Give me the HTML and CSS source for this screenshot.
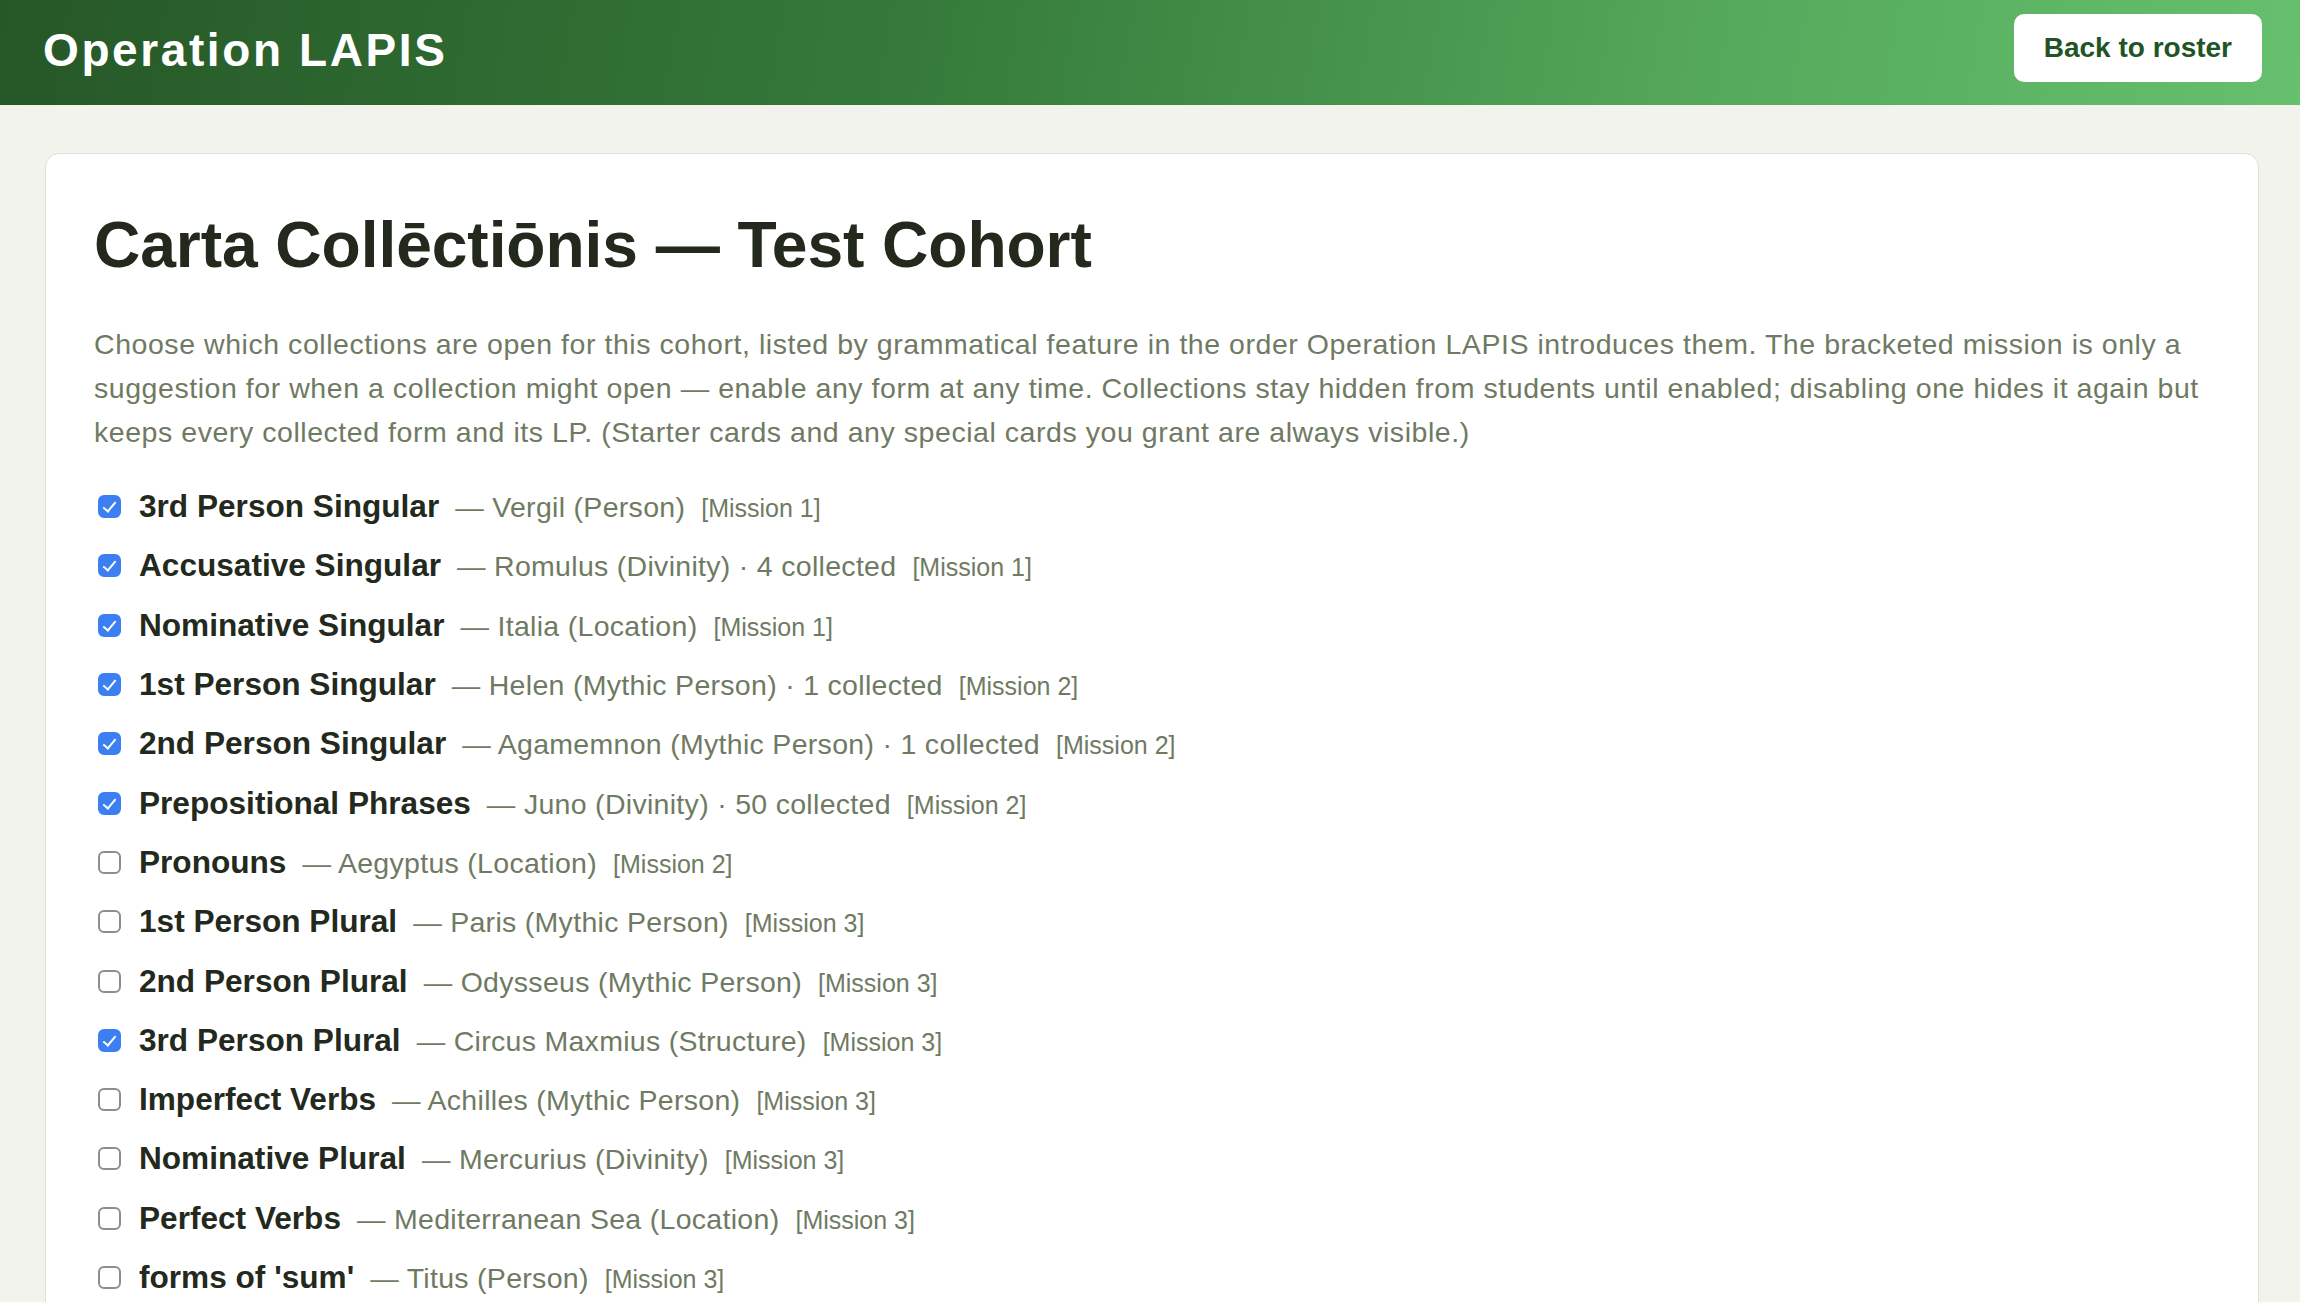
FILE: index.html
```html
<!DOCTYPE html>
<html lang="en">
<head>
    <meta charset="UTF-8">
    <meta name="viewport" content="width=device-width, initial-scale=1.0">
    <title>Operation LAPIS - Carta Collēctiōnis</title>
    <link rel="stylesheet" href="styles.css">
</head>
<body>
    <header class="topbar">
        <h1 class="brand">Operation LAPIS</h1>
        <a class="back-btn" href="#">Back to roster</a>
    </header>

    <main class="page">
        <section class="card">
            <h2 class="card-title">Carta Collēctiōnis — Test Cohort</h2>
            <p class="intro">Choose which collections are open for this cohort, listed by grammatical feature in the order Operation LAPIS introduces them. The bracketed mission is only a suggestion for when a collection might open — enable any form at any time. Collections stay hidden from students until enabled; disabling one hides it again but keeps every collected form and its LP. (Starter cards and any special cards you grant are always visible.)</p>

            <ul class="collections">
                <li><label class="item"><input type="checkbox" checked><span class="name">3rd Person Singular</span><span class="form">— Vergil (Person)</span><span class="mission">[Mission 1]</span></label></li>
                <li><label class="item"><input type="checkbox" checked><span class="name">Accusative Singular</span><span class="form">— Romulus (Divinity) · 4 collected</span><span class="mission">[Mission 1]</span></label></li>
                <li><label class="item"><input type="checkbox" checked><span class="name">Nominative Singular</span><span class="form">— Italia (Location)</span><span class="mission">[Mission 1]</span></label></li>
                <li><label class="item"><input type="checkbox" checked><span class="name">1st Person Singular</span><span class="form">— Helen (Mythic Person) · 1 collected</span><span class="mission">[Mission 2]</span></label></li>
                <li><label class="item"><input type="checkbox" checked><span class="name">2nd Person Singular</span><span class="form">— Agamemnon (Mythic Person) · 1 collected</span><span class="mission">[Mission 2]</span></label></li>
                <li><label class="item"><input type="checkbox" checked><span class="name">Prepositional Phrases</span><span class="form">— Juno (Divinity) · 50 collected</span><span class="mission">[Mission 2]</span></label></li>
                <li><label class="item"><input type="checkbox"><span class="name">Pronouns</span><span class="form">— Aegyptus (Location)</span><span class="mission">[Mission 2]</span></label></li>
                <li><label class="item"><input type="checkbox"><span class="name">1st Person Plural</span><span class="form">— Paris (Mythic Person)</span><span class="mission">[Mission 3]</span></label></li>
                <li><label class="item"><input type="checkbox"><span class="name">2nd Person Plural</span><span class="form">— Odysseus (Mythic Person)</span><span class="mission">[Mission 3]</span></label></li>
                <li><label class="item"><input type="checkbox" checked><span class="name">3rd Person Plural</span><span class="form">— Circus Maxmius (Structure)</span><span class="mission">[Mission 3]</span></label></li>
                <li><label class="item"><input type="checkbox"><span class="name">Imperfect Verbs</span><span class="form">— Achilles (Mythic Person)</span><span class="mission">[Mission 3]</span></label></li>
                <li><label class="item"><input type="checkbox"><span class="name">Nominative Plural</span><span class="form">— Mercurius (Divinity)</span><span class="mission">[Mission 3]</span></label></li>
                <li><label class="item"><input type="checkbox"><span class="name">Perfect Verbs</span><span class="form">— Mediterranean Sea (Location)</span><span class="mission">[Mission 3]</span></label></li>
                <li><label class="item"><input type="checkbox"><span class="name">forms of 'sum'</span><span class="form">— Titus (Person)</span><span class="mission">[Mission 3]</span></label></li>
            </ul>
        </section>
    </main>
</body>
</html>
```

FILE: styles.css
```css
/* General */
body {
    font-family: "Liberation Sans", Arial, Helvetica, sans-serif;
    background-color: #f2f3ec;
    color: #232a1d;
    margin: 0;
    padding: 0;
}

/* Top bar */
.topbar {
    display: flex;
    justify-content: space-between;
    align-items: center;
    padding: 14px 38px 23px 43px;
    background: linear-gradient(100deg, #265727 0%, #357a3a 40%, #55a95c 75%, #66c06e 100%);
}

.brand {
    margin: 4px 0 0 0;
    color: white;
    font-size: 46px;
    line-height: 1.1;
    letter-spacing: 2.6px;
}

.back-btn {
    background-color: white;
    color: #1f5524;
    font-size: 28px;
    font-weight: bold;
    line-height: 34px;
    padding: 17px 30px;
    border-radius: 10px;
    text-decoration: none;
}

/* Main card */
.page {
    padding: 48px 41px 0 45px;
}

.card {
    background-color: white;
    border: 1px solid #dee1d2;
    border-radius: 14px;
    padding: 53px 48px 48px 48px;
}

.card-title {
    margin: 0;
    font-size: 64.2px;
    line-height: 1.2;
    letter-spacing: -0.1px;
    color: #232a1d;
}

.intro {
    margin: 38px 0 23px;
    font-size: 28.5px;
    line-height: 44px;
    letter-spacing: 0.55px;
    color: #6f7a63;
}

/* Collections list */
.collections {
    list-style-type: none;
    margin: 0;
    padding: 0;
}

.collections li {
    height: 59.3px;
    display: flex;
    align-items: center;
}

.item {
    display: flex;
    align-items: baseline;
    gap: 16px;
    cursor: pointer;
}

.item input {
    appearance: none;
    -webkit-appearance: none;
    position: relative;
    align-self: center;
    flex: none;
    width: 23px;
    height: 23px;
    margin: 0 2px 0 4px;
    border: 2px solid #8d8d8d;
    border-radius: 6px;
    background-color: white;
    cursor: pointer;
}

.item input:checked {
    background-color: #3b7ff3;
    border-color: #3b7ff3;
}

.item input:checked::after {
    content: "";
    position: absolute;
    left: 6px;
    top: 2px;
    width: 5px;
    height: 11px;
    border-right: 2.5px solid white;
    border-bottom: 2.5px solid white;
    transform: rotate(40deg);
}

.name {
    font-size: 31.6px;
    font-weight: bold;
    color: #232a1d;
}

.form {
    font-size: 28.5px;
    letter-spacing: 0.3px;
    color: #6f7a63;
}

.mission {
    font-size: 25px;
    color: #6f7a63;
}
```
